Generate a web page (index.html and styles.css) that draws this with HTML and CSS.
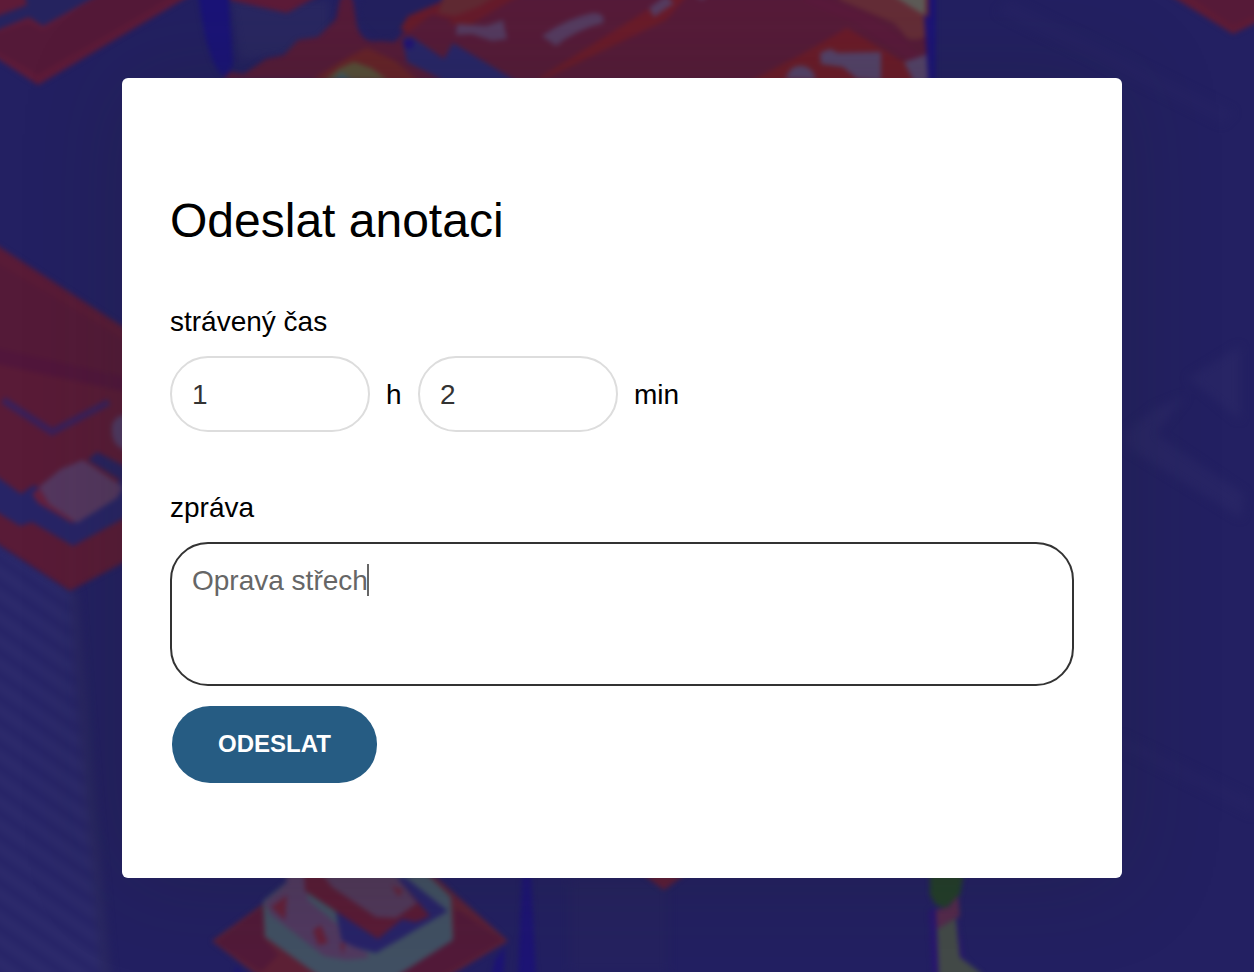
FILE: index.html
```html
<!DOCTYPE html>
<html lang="cs">
<head>
<meta charset="utf-8">
<title>Odeslat anotaci</title>
<link rel="stylesheet" href="styles.css">
</head>
<body>
<svg class="scene" viewBox="0 0 1254 972" aria-hidden="true">
  <defs>
    <filter id="soft" x="-5%" y="-5%" width="110%" height="110%" color-interpolation-filters="sRGB"><feGaussianBlur stdDeviation="2.4"/></filter>
    <filter id="haze" x="-5%" y="-5%" width="110%" height="110%" color-interpolation-filters="sRGB"><feGaussianBlur stdDeviation="4"/></filter>
    <pattern id="floors" width="60" height="23" patternUnits="userSpaceOnUse" patternTransform="skewY(35)">
      <rect width="60" height="23" fill="#2d2b6c"/>
      <rect y="4" width="60" height="9" fill="#252266"/>
    </pattern>
  </defs>
  <rect width="1254" height="972" fill="#232062"/>

  <g filter="url(#haze)">
    <path d="M-10 540L70 590 76 700 108 980H-10Z" fill="url(#floors)"/>
    <path d="M70 590h7l34 390h-10Z" fill="#2a2861"/>
    <path d="M230 0h100v50l-90 10Z" fill="#292762"/>
    <path d="M570 880h98v92h-98Z" fill="#252260"/>
    <path d="M1188 378L1240 346V420ZM1128 430l28-22 30-12-30 38 88 60-3 24-113-70Z" fill="#282565"/>
    <path d="M1010 0l224 112-12 12-225-112ZM1120 735l134 65v16l-134-68Z" fill="#262364" opacity=".6"/>
  </g>

  <g filter="url(#soft)">
    <path d="M-8 -8H196L38 85-8 55Z" fill="#5e1b38"/>
    <path d="M-8 35L28 23 43 31 106-8H180L38 75-8 49Z" fill="#541938"/>
    <path d="M24 -8H104L43 26 29 17-8 32V18L27 5Z" fill="#25235f"/>
    <path d="M198 -8h30l5 72-7 15-8-8q-13-20-20-79Z" fill="#1a1378"/>
    <path d="M230 0L287 13 325-8H230Z" fill="#5e1b38"/>
    <path d="M222 80l8-8 14 2 22-15 18-4 14-15 20-3 18-18 4-20q8-8 13 1l4 26q5 18 22 15l16 1 22-25 18-5 8-15 34-2H930L928 82Z" fill="#571b39"/>
    <path d="M312 80L350 56l17-8 27 12 26 22Z" fill="#682329"/>
    <path d="M325 80l15-12 14-6 17 6 17 12Z" fill="#585039"/>
    <path d="M333 80l8-8 12 8Z" fill="#405960"/>
    <path d="M367 -8H440L430 9 404 24 392 40 377 39 363 25 357 9Z" fill="#23205f"/>
    <path d="M400 29l8-13 30-13L460-8h65L470 25 452 24 434 42Z" fill="#671b2b"/>
    <path d="M404 36l28-22 20 6-14 36Z" fill="#571b39"/>
    <path d="M445 -8h57L480 6 455 16 438 13Z" fill="#612a33"/>
    <path d="M402 39q8-6 16 2l26 18 9-16 65 39h-71L407 62Z" fill="#28266a"/>
    <circle cx="409" cy="44" r="5" fill="#211277"/>
    <path d="M536 80L676-8h14l-24 28-70 34-51 25Z" fill="#6b1b2a"/>
    <path d="M457 24l29 2 17-6 4 19-15 2-20-7-16 1Z" fill="#553b60"/>
    <path d="M542 36q25-18 51-23 13 0 10 10-28 7-47 23Z" fill="#563c61"/>
    <path d="M649 8l17-12 8 7-20 14ZM690 -8h22l-10 8Z" fill="#563c61"/>
    <path d="M749 82L804 53 847 28 902 61l26-5v26Z" fill="#6c1b29"/>
    <path d="M838 -8h90v42q-8 8-20 5l-14-16-54-23Z" fill="#652d37"/>
    <path d="M888 -8h37v23l-6-3Z" fill="#5e5c58"/>
    <path d="M805 -8l67 25 33 24 21 19-19-1-50-35-54-23Z" fill="#5a1a3b"/>
    <path d="M785 79l6-10q12-8 22 3l3 8ZM820 53l10-4 8 4 43-1v29l-24-2-14-12-22-3ZM904 62l24-8v28h-14Z" fill="#55436a"/>
    <path d="M924 15l10 5v60h-6Z" fill="#241273"/>
    <path d="M929 -8h7v88h-8Z" fill="#1c1477"/>
    <path d="M1165 -8h97V20l-29 14Z" fill="#5e1b35"/>
    <path d="M1184 -8h78V12l-29 14Z" fill="#561a38"/>

    <path d="M-8 242L128 330V560L70 591-8 540Z" fill="#591b37"/>
    <path d="M-8 260L126 341V382L-8 348Z" fill="#541a38"/>
    <path d="M-8 347L126 377v15L-8 363Z" fill="#51163b"/>
    <path d="M3 400l49 32 57-30" fill="none" stroke="#39205a" stroke-width="7"/>
    <path d="M-8 473l29 21 13-9 39 24 55-33V516L73 546 32 522 20 526-8 509Z" fill="#272466"/>
    <path d="M88 460l9-8 31 16v17Z" fill="#27225f"/>
    <path d="M32 494l10-8 38 30-8 7-34-20Z" fill="#65203d"/>
    <path d="M39 487l22-18 22-9 40 27-6 11-40 25-28-19Z" fill="#54375f"/>
    <path d="M112 425q5-12 16-10v36q-18-4-16-26Z" fill="#503962"/>

    <path d="M212 941l51-37 55-32h112l78 69-66 39H263Z" fill="#5d2136"/>
    <path d="M216 942l47-35v30l15 18-17 17ZM455 908l48 32-69 40-47-5 67-38Z" fill="#521a39"/>
    <path d="M263 901l39-31h121l28 27 2 43-61 39h-69l-58-42Z" fill="#415063"/>
    <path d="M302 870l34 42 6 32 34 9 72-42-43-34Z" fill="#282369"/>
    <path d="M285 870h20l3 30 30 25 4 16 26 12v5l-22 2-22-4-53-41-7-12 23-20Z" fill="#513960"/>
    <path d="M304 870h86l40 46-14 6-14-3-24 20-73-48Z" fill="#5a1b36"/>
    <path d="M319 870h72l26 33-21 15-20-1-44-30Z" fill="#51385a"/>
    <path d="M271 907l16-12-2 25ZM313 930l8-5 7 18-10 2ZM391 885l12 5-4 7ZM340 944l5-2-2 13Z" fill="#642039"/>
    <path d="M522 872h9l5 108h-18ZM495 960l10-13-2 33h-13Z" fill="#1d1475"/>
    <path d="M236 966l10 14h-12Z" fill="#1d1475"/>
    <path d="M637 870h54l-27 20Z" fill="#5d1c37"/>

    <path d="M929 910l8-2 3 72h-7ZM956 905l8 53 20 22h-24Z" fill="#29166f"/>
    <path d="M930 872h34l-4 23-14 13-10-3-6-10Z" fill="#233e2a"/>
    <path d="M936 910l13-3 9-12 2 21-23 13Z" fill="#552a4c"/>
    <path d="M937 929l19-11 4 39 22 17v8h-43Z" fill="#434a48"/>
  </g>
</svg>

<main class="dialog">
  <h1 class="title">Odeslat anotaci</h1>
  <form class="form">
    <div class="label">strávený čas</div>
    <div class="time">
      <input class="field" type="text" value="1" aria-label="hodiny">
      <span class="unit unit-hours">h</span>
      <input class="field" type="text" value="2" aria-label="minuty">
      <span class="unit">min</span>
    </div>
    <div class="label">zpráva</div>
    <div class="message" role="textbox" aria-multiline="true" aria-label="zpráva"><span>Oprava střech</span><span class="caret"></span></div>
    <button class="submit" type="button">ODESLAT</button>
  </form>
</main>
</body>
</html>
```

FILE: styles.css
```css
* {
  box-sizing: border-box;
}

body {
  margin: 0;
  width: 1254px;
  height: 972px;
  padding: 78px 0 0 122px;
  overflow: hidden;
  background: #232062;
  color: #000;
  font-family: "Liberation Sans", Arial, sans-serif;
}

.scene {
  position: absolute;
  inset: 0;
  z-index: -1;
  width: 1254px;
  height: 972px;
}

.dialog {
  width: 1000px;
  height: 800px;
  padding: 114px 48px 0;
  border-radius: 6px;
  background: #fff;
  box-shadow: 0 0 100px rgba(34, 38, 34, 0.22);
}

.title {
  margin: 0 0 48px;
  font-size: 48px;
  font-weight: 400;
  line-height: 58px;
}

.form {
  display: flex;
  flex-direction: column;
  align-items: flex-start;
}

.label {
  height: 58px;
  padding-top: 8px;
  font-size: 28px;
  line-height: 32px;
}

.time {
  display: flex;
  align-items: center;
  gap: 16px;
  margin-bottom: 52px;
  font-size: 28px;
}

.field {
  width: 200px;
  height: 76px;
  padding: 2px 20px 0;
  border: 2px solid #ddd;
  border-radius: 38px;
  outline: 0;
  background: #fff;
  color: #333;
  font: inherit;
}

.unit {
  padding-top: 2px;
  line-height: 32px;
}

.unit-hours {
  width: 16px;
}

.message {
  display: flex;
  width: 904px;
  height: 144px;
  padding: 20px;
  border: 2px solid #333;
  border-radius: 38px;
  color: #666;
  font-size: 28px;
  line-height: 34px;
}

.caret {
  width: 2px;
  height: 32px;
  margin-left: -1px;
  background: #666;
}

.submit {
  width: 205px;
  height: 77px;
  margin: 20px 0 0 2px;
  padding: 0 0 2px;
  border: 0;
  border-radius: 38px;
  background: #265c83;
  color: #fff;
  font: bold 24px "Liberation Sans", Arial, sans-serif;
}
```
